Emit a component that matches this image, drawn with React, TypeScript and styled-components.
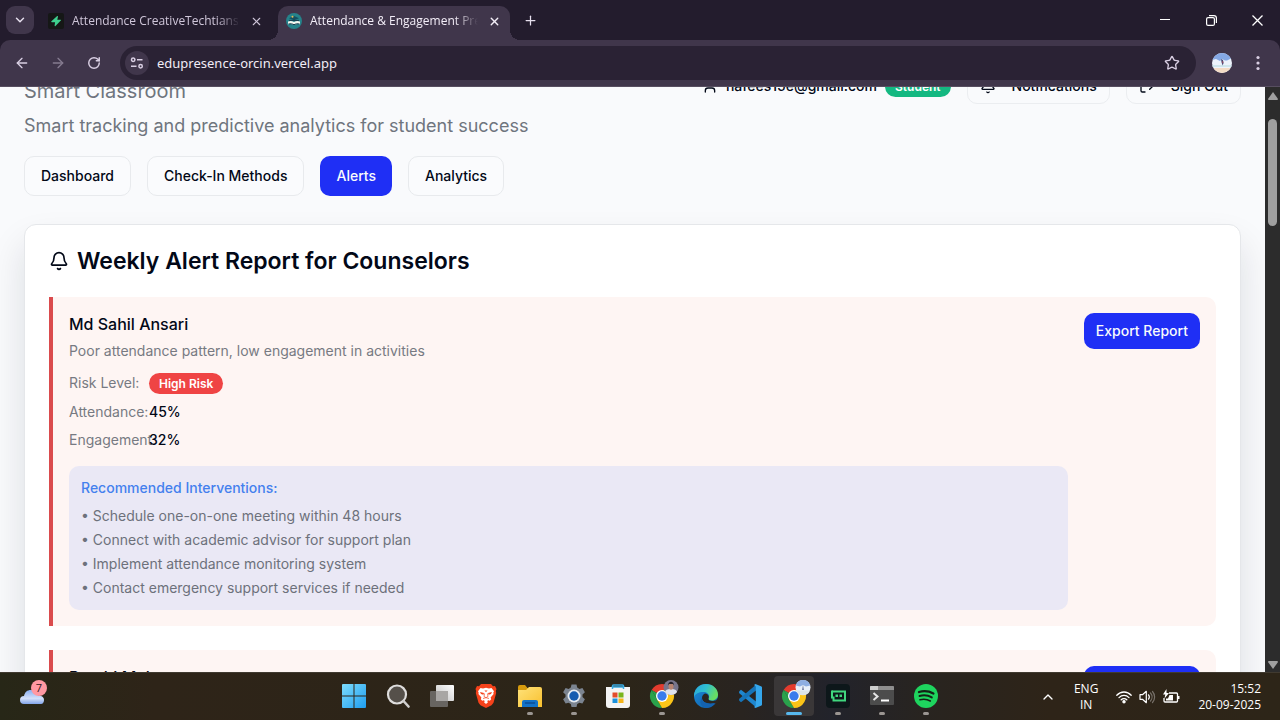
import React from "react";
import styled, { createGlobalStyle } from "styled-components";
import {
  ArrowLeft,
  ArrowRight,
  Bell,
  ChevronDown,
  ChevronUp,
  LogOut,
  Plus,
  RotateCw,
  Star,
  User,
  X,
} from "lucide-react";

const GlobalStyle = createGlobalStyle`
  *, *::before, *::after { box-sizing: border-box; }
  body {
    margin: 0;
    font-family: Inter, "Liberation Sans", sans-serif;
    font-size: 14px;
    line-height: 20px;
    color: #020817;
    overflow: hidden;
  }
  button, input { font: inherit; color: inherit; }
  button { border: 0; padding: 0; background: none; cursor: pointer; }
  h1, h2, h3, h4, p, ul, dl, dd, dt { margin: 0; padding: 0; font-weight: inherit; font-size: inherit; }
  ul { list-style: none; }
  svg { display: block; flex-shrink: 0; }
`;

const Desktop = styled.div`
  display: flex;
  flex-direction: column;
  height: 100vh;
`;

/* ---------- Browser chrome ---------- */

const TabStrip = styled.header`
  display: flex;
  align-items: stretch;
  flex-shrink: 0;
  height: 40px;
  padding-left: 6px;
  background: #231c2d;
  color: #e6dfee;
  font-family: "Open Sans", "Noto Sans", sans-serif;
`;

const TabSearch = styled.button`
  display: grid;
  place-items: center;
  align-self: center;
  width: 28px;
  height: 28px;
  border-radius: 9px;
  background: #40364b;
`;

const Tab = styled.div<{ $active?: boolean }>`
  position: relative;
  display: flex;
  align-items: center;
  gap: 8px;
  width: 232px;
  margin-top: 6px;
  margin-left: 6px;
  padding: 0 8px 4px;
  border-radius: 10px 10px 0 0;
  background: ${(p) => (p.$active ? "#40364b" : "transparent")};
  color: ${(p) => (p.$active ? "#f3eef8" : "#cfc6d9")};

  &::before,
  &::after {
    content: "";
    display: ${(p) => (p.$active ? "block" : "none")};
    position: absolute;
    bottom: 0;
    width: 10px;
    height: 10px;
  }
  &::before {
    left: -10px;
    background: radial-gradient(circle at 0 0, transparent 10px, #40364b 10px);
  }
  &::after {
    right: -10px;
    background: radial-gradient(circle at 100% 0, transparent 10px, #40364b 10px);
  }
`;

const TabTitle = styled.span`
  flex: 1;
  overflow: hidden;
  white-space: nowrap;
  font-size: 12px;
  line-height: 16px;
  mask-image: linear-gradient(to right, #000 86%, transparent);
`;

const TabClose = styled.button`
  display: grid;
  place-items: center;
  width: 16px;
  height: 16px;
`;

const NewTab = styled.button`
  display: grid;
  place-items: center;
  width: 40px;
`;

const WindowControls = styled.div`
  display: flex;
  margin-left: auto;
  color: #fff;
`;

const WindowButton = styled.button`
  display: grid;
  place-items: center;
  width: 46px;
`;

const ToolbarBack = styled.div`
  flex-shrink: 0;
  background: #231c2d;
`;

const Toolbar = styled.div`
  display: flex;
  align-items: center;
  height: 47px;
  padding: 0 4px;
  border-bottom: 1px solid #574e60;
  border-radius: 10px 10px 0 0;
  background: #40364b;
  color: #d9cfe3;
`;

const ToolbarButton = styled.button<{ $dim?: boolean }>`
  display: grid;
  place-items: center;
  width: 36px;
  height: 34px;
  opacity: ${(p) => (p.$dim ? 0.45 : 1)};
`;

const Omnibox = styled.div`
  display: flex;
  align-items: center;
  flex: 1;
  height: 34px;
  margin: 0 8px;
  padding: 0 6px 0 5px;
  border-radius: 17px;
  background: #2a2234;
`;

const SiteInfo = styled.button`
  display: grid;
  place-items: center;
  width: 24px;
  height: 24px;
  border-radius: 12px;
  background: #40364b;
`;

const Address = styled.input`
  flex: 1;
  min-width: 0;
  margin-left: 8px;
  padding: 0;
  border: 0;
  outline: 0;
  background: none;
  color: #f1ecf6;
  font-family: "Noto Sans", "Open Sans", sans-serif;
  font-size: 13px;
`;

/* ---------- Page ---------- */

const Viewport = styled.div`
  display: flex;
  flex: 1;
  min-height: 0;
  overflow: hidden;
`;

const Page = styled.main`
  flex: 1;
  min-width: 0;
  overflow: hidden;
  background: #f9fafc;
`;

const Content = styled.div`
  margin-top: -43px;
  padding: 24px;
`;

const PageHeader = styled.div`
  display: flex;
  align-items: flex-start;
  justify-content: space-between;
`;

const Brand = styled.div`
  padding-top: 8px;
  color: #6f757e;
`;

const Product = styled.p`
  font-size: 20px;
  line-height: 30px;
`;

const Tagline = styled.p`
  margin-top: 6px;
  font-size: 18px;
  line-height: 28px;
`;

const Actions = styled.div`
  display: flex;
  align-items: center;
  gap: 16px;
`;

const Account = styled.div`
  display: flex;
  align-items: center;
  gap: 8px;
  font-weight: 500;
`;

const Badge = styled.span<{ $tone: string }>`
  padding: 2px 10px;
  border-radius: 12px;
  background: ${(p) => p.$tone};
  color: #fff;
  font-size: 12px;
  font-weight: 600;
  line-height: 17px;
`;

const OutlineButton = styled.button`
  display: flex;
  align-items: center;
  gap: 16px;
  height: 36px;
  padding: 0 12px;
  border: 1px solid #ebedf0;
  border-radius: 10px;
  font-weight: 500;
`;

const Nav = styled.nav`
  display: flex;
  gap: 16px;
  margin: 16px 0 28px;
`;

const NavButton = styled.button<{ $active?: boolean }>`
  height: 40px;
  padding: 0 16px;
  border: ${(p) => (p.$active ? "0" : "1px solid #e8eaed")};
  border-radius: 10px;
  background: ${(p) => (p.$active ? "#1f2ff5" : "#fafbfd")};
  color: ${(p) => (p.$active ? "#f8fafc" : "#020817")};
  font-weight: 500;
`;

const Card = styled.section`
  padding: 24px;
  border: 1px solid #e5e7ea;
  border-radius: 12px;
  background: #fff;
  box-shadow: 0 20px 36px rgba(15, 23, 42, 0.12);
`;

const CardTitle = styled.h2`
  display: flex;
  align-items: center;
  gap: 8px;
  margin-bottom: 24px;
  font-size: 23px;
  font-weight: 600;
  line-height: 24px;
`;

const AlertList = styled.div`
  display: flex;
  flex-direction: column;
  gap: 24px;
`;

const AlertItem = styled.article`
  display: flex;
  align-items: flex-start;
  gap: 16px;
  padding: 16px;
  border-left: 4px solid #da4b4d;
  border-radius: 0 10px 10px 0;
  background: #fef5f3;
`;

const AlertBody = styled.div`
  flex: 1;
  min-width: 0;
`;

const StudentName = styled.h3`
  font-size: 16px;
  font-weight: 500;
  line-height: 22px;
`;

const Reason = styled.p`
  margin: 6px 0 12px;
  color: #777a82;
`;

const Metrics = styled.dl`
  display: grid;
  grid-template-columns: 80px 1fr;
  row-gap: 8px;
  margin-bottom: 16px;

  dt {
    white-space: nowrap;
    color: #777a82;
  }
  dd {
    display: flex;
    font-weight: 500;
  }
`;

const Interventions = styled.div`
  padding: 12px;
  border-radius: 10px;
  background: #eae8f5;
  color: #6d717b;

  h4 {
    margin-bottom: 8px;
    color: #4480ee;
    font-weight: 500;
  }
  ul {
    display: flex;
    flex-direction: column;
    gap: 4px;
  }
`;

const ExportButton = styled.button`
  height: 36px;
  padding: 0 12px;
  border-radius: 10px;
  background: #1f2ff5;
  color: #f8fafc;
  font-weight: 500;
`;

const ScrollTrack = styled.div`
  display: flex;
  flex-direction: column;
  align-items: center;
  width: 15px;
  padding: 5px 0 3px;
  background: #2c2c2c;
`;

const ScrollThumb = styled.div`
  width: 9px;
  height: 107px;
  margin-top: 19px;
  margin-bottom: auto;
  border-radius: 5px;
  background: #9f9f9f;
`;

/* ---------- Taskbar ---------- */

const Taskbar = styled.footer`
  display: grid;
  grid-template-columns: 1fr auto 1fr;
  flex-shrink: 0;
  height: 48px;
  border-top: 1px solid #403a30;
  background: linear-gradient(
    to right,
    #272717,
    #2e2418 12%,
    #2c2518 48%,
    #292420 58%,
    #22232b 65%,
    #282420 72%,
    #2e2418 82%,
    #2d2518
  );
  color: #fff;
  font-family: "Open Sans", "Noto Sans", sans-serif;
  font-size: 12px;
  line-height: 16px;
`;

const Weather = styled.button`
  position: relative;
  align-self: center;
  justify-self: start;
  width: 30px;
  height: 28px;
  margin-left: 18px;
`;

const WeatherCount = styled.span`
  position: absolute;
  top: -3px;
  right: 1px;
  width: 16px;
  height: 16px;
  border-radius: 8px;
  background: #ff98a2;
  color: #33161a;
  font-size: 11px;
  line-height: 16px;
`;

const Apps = styled.div`
  display: flex;
`;

const AppButton = styled.button<{ $active?: boolean; $running?: boolean }>`
  position: relative;
  display: grid;
  place-items: center;
  width: 40px;
  height: 40px;
  margin: 3px 2px;
  border-radius: 4px;
  background: ${(p) => (p.$active ? "#3a3738" : "transparent")};

  &::after {
    content: "";
    display: ${(p) => (p.$active || p.$running ? "block" : "none")};
    position: absolute;
    bottom: 1px;
    left: 50%;
    width: ${(p) => (p.$active ? 16 : 6)}px;
    height: 3px;
    border-radius: 2px;
    transform: translateX(-50%);
    background: ${(p) => (p.$active ? "#57b8ee" : "#9b9692")};
  }
`;

const Tray = styled.div`
  display: flex;
  align-items: center;
  justify-self: end;
  padding-right: 19px;
`;

const TrayButton = styled.button`
  display: flex;
  align-items: center;
  gap: 7px;
  margin-right: 18px;
`;

const Language = styled(TrayButton)`
  display: block;
  text-align: center;
`;

const Clock = styled.button`
  text-align: right;
`;

const Supabase = () => (
  <svg width="16" height="16" viewBox="0 0 16 16">
    <rect width="16" height="16" rx="2" fill="#151716" />
    <path d="M9.200 3 3.400 8.300c-.4.4-.1.9.4.9h3.300L6.600 12.600c0 .6.500.8.9.4l5.300-5.400c.4-.4.1-.9-.4-.9H9.300L10 3.500c.1-.5-.4-.8-.8-.5z" fill="#3ecf8e" />
  </svg>
);

const SiteIcon = () => (
  <svg width="16" height="16" viewBox="0 0 16 16">
    <circle cx="8" cy="8" r="8" fill="#25838b" />
    <path d="M3 5.200 8 3l5 2.200-5 2z" fill="#164f60" />
    <circle cx="6.500" cy="3.800" r="1" fill="#e7bd55" />
    <path d="M2 8.600c2-1 4-.8 6 .4 2-1.200 4-1.400 6-.4v2.800c-2-.8-4-.6-6 .4-2-1-4-1.200-6-.4z" fill="#f1f5ee" />
    <path d="M2.400 11c2-.5 3.800-.2 5.600.7 1.800-.9 3.600-1.200 5.600-.7M3 7.400h10" fill="none" stroke="#173a4c" strokeWidth="1" />
  </svg>
);

const TuneIcon = () => (
  <svg width="14" height="14" viewBox="0 0 14 14" fill="none" stroke="currentColor" strokeWidth="1.5">
    <circle cx="3.2" cy="3.8" r="1.7" />
    <path d="M7 3.800h5.500M1 10.200h5.500" />
    <circle cx="10.6" cy="10.2" r="1.7" />
  </svg>
);

const Avatar = () => (
  <svg width="20" height="20" viewBox="0 0 20 20">
    <clipPath id="avatar">
      <circle cx="10" cy="10" r="10" />
    </clipPath>
    <g clipPath="url(#avatar)">
      <rect width="20" height="20" fill="#edf3fb" />
      <path d="M0 0h20v5l-5 2.500H13L10 6 8 8 4 6 0 7z" fill="#85a9e5" />
      <path d="M0 12h20v2H0z" fill="#cfe6ec" />
      <path d="M0 15h20v5H0z" fill="#f3dcc6" />
      <path d="m9 6 2 1 .6 3-1 2.500-1-3z" fill="#444c7a" />
      <path d="m10.300 8 1.200 1-1 1.400z" fill="#c64750" />
    </g>
  </svg>
);

const Dots = () => (
  <svg width="4" height="16" viewBox="0 0 4 16" fill="currentColor">
    <circle cx="2" cy="2.5" r="1.6" />
    <circle cx="2" cy="8" r="1.6" />
    <circle cx="2" cy="13.5" r="1.6" />
  </svg>
);

const Cloud = () => (
  <svg width="26" height="28" viewBox="0 0 26 28">
    <defs>
      <linearGradient id="cloud" x1="0" y1="0" x2="0" y2="1">
        <stop offset="0" stopColor="#88aef0" />
        <stop offset=".6" stopColor="#d3e0fa" />
        <stop offset="1" stopColor="#82a5ea" />
      </linearGradient>
    </defs>
    <path d="M6 21a4 4 0 0 1 0-8c1-4 3-6 7-6 4 0 6 3 7 5.500 4 0 6 1.800 6 4.500 0 2-1 4-3 4z" fill="url(#cloud)" />
  </svg>
);

const WindowsIcon = () => (
  <svg width="24" height="24" viewBox="0 0 24 24">
    <defs>
      <linearGradient id="win" x1="0" y1="0" x2="1" y2="1">
        <stop offset="0" stopColor="#7ddcfc" />
        <stop offset="1" stopColor="#1e9df0" />
      </linearGradient>
    </defs>
    <path d="M1 0h10.500v11.500H0V1a1 1 0 0 1 1-1zM12.500 0H23a1 1 0 0 1 1 1v10.500H12.500zM0 12.500h11.500V24H1a1 1 0 0 1-1-1zM12.500 12.500H24V23a1 1 0 0 1-1 1H12.500z" fill="url(#win)" />
  </svg>
);

const SearchIcon = () => (
  <svg width="24" height="24" viewBox="0 0 24 24">
    <circle cx="11" cy="10.500" r="9" fill="#55504a" stroke="#dedddc" strokeWidth="2.200" />
    <path d="m17.500 17 5 5.500" stroke="#cfcecd" strokeWidth="2.600" strokeLinecap="round" />
  </svg>
);

const TaskViewIcon = () => (
  <svg width="24" height="24" viewBox="0 0 24 24">
    <defs>
      <linearGradient id="tv" x1="0" y1="1" x2="1" y2="0">
        <stop offset="0" stopColor="#bdbdbd" />
        <stop offset="1" stopColor="#fff" />
      </linearGradient>
    </defs>
    <rect y="7" width="18" height="16" rx="1" fill="#686561" />
    <rect x="6" y="1" width="18" height="16" rx="1" fill="url(#tv)" />
    <path d="M6 7h12v10H7a1 1 0 0 1-1-1z" fill="#a8a6a4" />
  </svg>
);

const BraveIcon = () => (
  <svg width="22" height="24" viewBox="0 0 22 24">
    <path d="M6 0h10l2 2.300 2-.3 1.500 3-.7 2 .4 2-2.700 9.800-2 2.400L11 24l-5.500-2.800-2-2.400L.8 9l.4-2-.7-2L2 2l2 .3z" fill="#f5421b" />
    <path d="M5.500 4 8 4.400 11 3.800l3 .6 2.500-.4L19 7.200l-.7 1.600.3 1.200-3 3.600.6 1.600-1.400 1.600-1.600-.6-1.200 1 1.200.9L11 20l-2.200-1.900 1.200-.9-1.200-1-1.600.6-1.400-1.600.6-1.600-3-3.600.3-1.200L3 7.200z" fill="#fff" />
    <path d="m5 8 4 1.100-.6 1.600L6 10zM17 8l-4 1.100.6 1.600L16 10zM9.400 6.500h3.200L11 8z" fill="#f5421b" />
    <path d="m9.500 9.500-.5 3 2 1.200 2-1.200-.5-3M8 14.500l3-.8 3 .8" fill="none" stroke="#f5421b" strokeWidth=".7" />
  </svg>
);

const FolderIcon = () => (
  <svg width="24" height="24" viewBox="0 0 24 24">
    <defs>
      <linearGradient id="fold" x1="0" y1="0" x2="1" y2="1">
        <stop offset="0" stopColor="#ffe27a" />
        <stop offset="1" stopColor="#f8c02e" />
      </linearGradient>
    </defs>
    <path d="M0 3a2 2 0 0 1 2-2h5l2.500 3H20v5H0z" fill="#d79b0e" />
    <path d="M0 6h8l3-3h11a2 2 0 0 1 2 2v18H0z" fill="url(#fold)" />
    <path d="M4 23v-5a2 2 0 0 1 2-2h12a2 2 0 0 1 2 2v5z" fill="#1272c8" />
    <path d="M7.500 19h9" stroke="#0b4c94" strokeWidth="1.500" strokeLinecap="round" />
  </svg>
);

const SettingsIcon = () => (
  <svg width="24" height="24" viewBox="0 0 24 24">
    <path d="M9.500.5h5l.7 3.100 2.200 1.300 3-1 2.500 4.400-2.400 2.100v2.700l2.400 2.200-2.500 4.300-3-.9-2.200 1.200-.7 3.200h-5l-.7-3.200-2.200-1.200-3 .9-2.500-4.300 2.400-2.200v-2.700L1.100 8.300l2.500-4.400 3 1 2.200-1.300z" fill="#7b8490" />
    <circle cx="12" cy="12" r="6.500" fill="#e5ebf1" />
    <circle cx="12" cy="12" r="4.700" fill="#155cb0" />
  </svg>
);

const StoreIcon = () => (
  <svg width="24" height="24" viewBox="0 0 24 24">
    <path d="M6.500 5V2a1 1 0 0 1 1-1h9a1 1 0 0 1 1 1v3" fill="none" stroke="#38a9df" strokeWidth="1.500" />
    <path d="M0 3h24v18a3 3 0 0 1-3 3H3a3 3 0 0 1-3-3z" fill="#f4f4f4" />
    <path d="M6.500 5V3h11v2" fill="none" stroke="#38a9df" strokeWidth="1.500" />
    <path d="M6.500 8.500h5v5h-5z" fill="#e34c2b" />
    <path d="M12.500 8.500h5v5h-5z" fill="#79b51c" />
    <path d="M6.500 14.500h5v4.500h-5z" fill="#1b91dc" />
    <path d="M12.500 14.500h5v4.500h-5z" fill="#f5b51b" />
  </svg>
);

const ChromeIcon = ({ person }: { person?: boolean }) => (
  <svg width="36" height="36" viewBox="-5 -1 36 36">
    <path d="M13 17 2.600 11A12 12 0 0 1 23.400 11H13z" fill="#e33b2e" />
    <path d="M2.600 11 7.800 20 13 29A12 12 0 0 1 2.600 11z" fill="#2aa24c" />
    <path d="M13 17 7.800 20 13 29A12 12 0 0 0 23.400 11H13z" fill="#fbc418" />
    <path d="M2.600 11 7.800 20 13 17z" fill="#2aa24c" />
    <circle cx="13" cy="17" r="6" fill="#fff" />
    <circle cx="13" cy="17" r="4.700" fill="#3a7cec" />
    {person ? (
      <g>
        <circle cx="22" cy="8.500" r="7.500" fill="#77758c" />
        <path d="M16 13c.5-2 2-3 6-3s5.500 1 6 3A7.500 7.500 0 0 1 16 13z" fill="#dfe2ec" />
        <ellipse cx="22" cy="7.500" rx="2.500" ry="3.300" fill="#b78572" />
        <path d="M19 6.500c0-5 6-5 6 0L24 5h-4z" fill="#25212b" />
      </g>
    ) : (
      <g>
        <circle cx="22" cy="8.500" r="7.500" fill="#e9f0fa" />
        <path d="M14.800 6.500a7.500 7.500 0 0 1 14.400 0L25 7.500 22 6l-3 1.500z" fill="#8eaee2" />
        <path d="M15 11.500h14a7.500 7.500 0 0 1-14 0z" fill="#dce5e8" />
        <path d="m22 6 .8 5h-1.600z" fill="#59648f" />
      </g>
    )}
  </svg>
);

const EdgeIcon = () => (
  <svg width="24" height="24" viewBox="0 0 24 24">
    <defs>
      <linearGradient id="edgeTop" x1="0" y1="0" x2="1" y2=".4">
        <stop offset="0" stopColor="#2aa5dc" />
        <stop offset=".5" stopColor="#2fbfd2" />
        <stop offset="1" stopColor="#68dc63" />
      </linearGradient>
      <linearGradient id="edgeLow" x1="0" y1="0" x2="1" y2="1">
        <stop offset="0" stopColor="#1d8fdc" />
        <stop offset="1" stopColor="#0c59a4" />
      </linearGradient>
    </defs>
    <circle cx="12" cy="12" r="12" fill="url(#edgeLow)" />
    <path d="M0 11C.8 4.500 5.500 0 12 0c7 0 12 5 12 10.500 0 3.500-2.500 6-6 6-2.500 0-4-1-3.500-2 1.600-2.200 0-6-4-6.500C6 7.500 1.500 9 0 13z" fill="url(#edgeTop)" />
    <path d="M8 14c0-2 1.200-3.600 3-4.500 3 0 4.500 3 3.500 5-.5 1 1 2.600 3.500 2.600 2 0 3.500-.6 4.500-1.200l1.500-2V19l-3.200.5c-1.500.3-3 .5-4.800.5-4 0-8-2.800-8-6z" fill="#2b2620" />
    <path d="M8 14c0 4 5 6.500 13 5-2 3-5 4.700-8.500 5C6 23 5 17 8 14z" fill="#1462b0" />
  </svg>
);

const CodeIcon = () => (
  <svg width="24" height="24" viewBox="0 0 24 24">
    <path d="M1.300 7.200 3 5.800l15 11.700v5.800L1 9z" fill="#1e86ce" />
    <path d="M1.300 16.800 3 18.200l15-11.700V.7L1 15z" fill="#1674b8" />
    <path d="m17.500 0 6 2.600c.3.200.5.500.5.900v17c0 .4-.2.700-.5.900L17.500 24l-1.500-1 1.800-1.500v-19L16 1z" fill="#35a7ec" />
  </svg>
);

const RobotIcon = () => (
  <svg width="24" height="24" viewBox="0 0 24 24">
    <rect width="24" height="24" rx="4" fill="#0d171a" />
    <path d="M6 7.500h13v9H7.500v-3H5" fill="none" stroke="#40d77e" strokeWidth="2" />
    <path d="M5 6.500h2v7H5z" fill="#40d77e" />
    <path d="M9.500 10.500h2.500v2.500H9.500zM13.500 10.500H16v2.500h-2.500z" fill="#40d77e" />
  </svg>
);

const TerminalIcon = () => (
  <svg width="24" height="20" viewBox="0 0 24 20">
    <rect width="24" height="19" rx="1" fill="#4c4c4c" />
    <path d="M0 1a1 1 0 0 1 1-1h22a1 1 0 0 1 1 1v3H0z" fill="#8e8e8e" />
    <path d="M0 1a1 1 0 0 1 1-1h7v4H0z" fill="#cdcdcd" />
    <path d="m3.500 7 4 3.500-4 3.500" fill="none" stroke="#e5e5e5" strokeWidth="2" />
    <path d="M11 14.500h8" stroke="#fff" strokeWidth="2" />
  </svg>
);

const SpotifyIcon = () => (
  <svg width="24" height="24" viewBox="0 0 24 24">
    <circle cx="12" cy="12" r="12" fill="#1ed45e" />
    <g fill="none" stroke="#152016" strokeLinecap="round">
      <path d="M5 8c5-1.400 10-.9 14.400 1.500" strokeWidth="2.300" />
      <path d="M5.500 12c4.300-1.200 8.700-.7 12.300 1.400" strokeWidth="1.900" />
      <path d="M6 15.700c3.700-.9 7.300-.5 10.300 1.300" strokeWidth="1.600" />
    </g>
  </svg>
);

const WifiIcon = () => (
  <svg width="16" height="14" viewBox="0 0 16 14" fill="none" stroke="#fff" strokeWidth="1.300" strokeLinecap="round">
    <path d="M.8 5.300c4-4.400 10.400-4.400 14.400 0M3 7.600c2.900-3 7.100-3 10 0M5.200 9.800c1.600-1.600 4-1.600 5.600 0" />
    <circle cx="8" cy="11.700" r="1.100" fill="#fff" />
  </svg>
);

const VolumeIcon = () => (
  <svg width="17" height="14" viewBox="0 0 17 14" fill="none" stroke="#fff" strokeWidth="1.200" strokeLinejoin="round" strokeLinecap="round">
    <path d="M1 4.700h2.500L7.300 1.300v11.400L3.500 9.300H1zM9.500 4.800c1 1.300 1 3.100 0 4.400" />
    <path d="M11.500 3c2 2.300 2 5.700 0 8M13.500 1.500c2.800 3.200 2.800 7.800 0 11" stroke="#77716a" />
  </svg>
);

const BatteryIcon = () => (
  <svg width="17" height="15" viewBox="0 0 17 15">
    <path d="M6 4h7.500a1 1 0 0 1 1 1v7a1 1 0 0 1-1 1H2a1 1 0 0 1-1-1V9" fill="none" stroke="#fff" strokeWidth="1.300" />
    <path d="M15 7h1.500v3H15zM6.500 6H10v5.500H3V9.500h2z" fill="#fff" />
    <path d="M3.500 0 0 5.500h2.300L1.500 9.500 6 4H3.500z" fill="#fff" />
  </svg>
);

const Arrow = ({ down }: { down?: boolean }) => (
  <svg width="10" height="8" viewBox="0 0 10 8">
    <path d={down ? "M1 0h8a1 1 0 0 1 .7 1.500L5 8 .3 1.500A1 1 0 0 1 1 0z" : "M1 8h8a1 1 0 0 0 .7-1.500L5 0 .3 6.500A1 1 0 0 0 1 8z"} fill="#a0a0a0" />
  </svg>
);

const alerts = [
  {
    name: "Md Sahil Ansari",
    reason: "Poor attendance pattern, low engagement in activities",
    attendance: "45%",
    engagement: "32%",
  },
  {
    name: "Prachi Mehta",
    reason: "Poor attendance pattern, low engagement in activities",
    attendance: "45%",
    engagement: "32%",
  },
];

const interventions = [
  "Schedule one-on-one meeting within 48 hours",
  "Connect with academic advisor for support plan",
  "Implement attendance monitoring system",
  "Contact emergency support services if needed",
];

const sections = ["Dashboard", "Check-In Methods", "Alerts", "Analytics"];

const apps = [
  { name: "Start", icon: <WindowsIcon /> },
  { name: "Search", icon: <SearchIcon /> },
  { name: "Task View", icon: <TaskViewIcon /> },
  { name: "Brave", icon: <BraveIcon /> },
  { name: "File Explorer", icon: <FolderIcon />, running: true },
  { name: "Settings", icon: <SettingsIcon />, running: true },
  { name: "Microsoft Store", icon: <StoreIcon /> },
  { name: "Chrome, personal", icon: <ChromeIcon person />, running: true },
  { name: "Edge", icon: <EdgeIcon /> },
  { name: "Visual Studio Code", icon: <CodeIcon /> },
  { name: "Chrome", icon: <ChromeIcon />, active: true },
  { name: "Assistant", icon: <RobotIcon />, running: true },
  { name: "Terminal", icon: <TerminalIcon />, running: true },
  { name: "Spotify", icon: <SpotifyIcon />, running: true },
];

export default function App() {
  return (
    <Desktop>
      <GlobalStyle />
      <TabStrip>
        <TabSearch aria-label="Search tabs">
          <ChevronDown size={14} strokeWidth={2.5} />
        </TabSearch>
        <Tab>
          <Supabase />
          <TabTitle>Attendance CreativeTechtians | Supabase</TabTitle>
          <TabClose aria-label="Close tab">
            <X size={13} />
          </TabClose>
        </Tab>
        <Tab $active>
          <SiteIcon />
          <TabTitle>Attendance &amp; Engagement Predictor</TabTitle>
          <TabClose aria-label="Close tab">
            <X size={13} strokeWidth={2.5} />
          </TabClose>
        </Tab>
        <NewTab aria-label="New tab">
          <Plus size={15} />
        </NewTab>
        <WindowControls>
          <WindowButton aria-label="Minimize">
            <svg width="10" height="10" viewBox="0 0 10 10" stroke="currentColor">
              <path d="M0 4.500h10" />
            </svg>
          </WindowButton>
          <WindowButton aria-label="Restore">
            <svg width="11" height="11" viewBox="0 0 11 11" fill="none" stroke="currentColor" strokeWidth="1.200">
              <rect x=".6" y="2.600" width="7.800" height="7.800" rx="1.500" />
              <path d="M3 .6h5a2.500 2.500 0 0 1 2.400 2.500V8" />
            </svg>
          </WindowButton>
          <WindowButton aria-label="Close window">
            <svg width="11" height="11" viewBox="0 0 11 11" stroke="currentColor" strokeWidth="1.300">
              <path d="m.5.5 10 10M10.500.5l-10 10" />
            </svg>
          </WindowButton>
        </WindowControls>
      </TabStrip>
      <ToolbarBack>
        <Toolbar>
          <ToolbarButton aria-label="Back">
            <ArrowLeft size={16} />
          </ToolbarButton>
          <ToolbarButton $dim aria-label="Forward">
            <ArrowRight size={16} />
          </ToolbarButton>
          <ToolbarButton aria-label="Reload">
            <RotateCw size={14} strokeWidth={2.5} />
          </ToolbarButton>
          <Omnibox>
            <SiteInfo aria-label="View site information">
              <TuneIcon />
            </SiteInfo>
            <Address aria-label="Address" defaultValue="edupresence-orcin.vercel.app" />
            <ToolbarButton aria-label="Bookmark this tab">
              <Star size={16} />
            </ToolbarButton>
          </Omnibox>
          <ToolbarButton aria-label="Profile">
            <Avatar />
          </ToolbarButton>
          <ToolbarButton aria-label="Browser menu">
            <Dots />
          </ToolbarButton>
        </Toolbar>
      </ToolbarBack>
      <Viewport>
        <Page>
          <Content>
            <PageHeader>
              <Brand>
                <Product>Smart Classroom</Product>
                <Tagline>Smart tracking and predictive analytics for student success</Tagline>
              </Brand>
              <Actions>
                <Account>
                  <User size={16} />
                  <span>nafees15e@gmail.com</span>
                  <Badge $tone="#14b881">Student</Badge>
                </Account>
                <OutlineButton>
                  <Bell size={16} />
                  Notifications
                </OutlineButton>
                <OutlineButton>
                  <LogOut size={16} />
                  Sign Out
                </OutlineButton>
              </Actions>
            </PageHeader>
            <Nav>
              {sections.map((name) => (
                <NavButton key={name} $active={name === "Alerts"}>
                  {name}
                </NavButton>
              ))}
            </Nav>
            <Card>
              <CardTitle>
                <Bell size={20} />
                Weekly Alert Report for Counselors
              </CardTitle>
              <AlertList>
                {alerts.map((alert) => (
                  <AlertItem key={alert.name}>
                    <AlertBody>
                      <StudentName>{alert.name}</StudentName>
                      <Reason>{alert.reason}</Reason>
                      <Metrics>
                        <dt>Risk Level:</dt>
                        <dd>
                          <Badge $tone="#ef4444">High Risk</Badge>
                        </dd>
                        <dt>Attendance:</dt>
                        <dd>{alert.attendance}</dd>
                        <dt>Engagement:</dt>
                        <dd>{alert.engagement}</dd>
                      </Metrics>
                      <Interventions>
                        <h4>Recommended Interventions:</h4>
                        <ul>
                          {interventions.map((item) => (
                            <li key={item}>• {item}</li>
                          ))}
                        </ul>
                      </Interventions>
                    </AlertBody>
                    <ExportButton>Export Report</ExportButton>
                  </AlertItem>
                ))}
              </AlertList>
            </Card>
          </Content>
        </Page>
        <ScrollTrack>
          <Arrow />
          <ScrollThumb />
          <Arrow down />
        </ScrollTrack>
      </Viewport>
      <Taskbar>
        <Weather aria-label="Weather">
          <Cloud />
          <WeatherCount>7</WeatherCount>
        </Weather>
        <Apps>
          {apps.map((app) => (
            <AppButton key={app.name} aria-label={app.name} $active={app.active} $running={app.running}>
              {app.icon}
            </AppButton>
          ))}
        </Apps>
        <Tray>
          <TrayButton aria-label="Show hidden icons">
            <ChevronUp size={16} />
          </TrayButton>
          <Language>
            ENG
            <br />
            IN
          </Language>
          <TrayButton aria-label="Network, volume and battery">
            <WifiIcon />
            <VolumeIcon />
            <BatteryIcon />
          </TrayButton>
          <Clock>
            15:52
            <br />
            20-09-2025
          </Clock>
        </Tray>
      </Taskbar>
    </Desktop>
  );
}
